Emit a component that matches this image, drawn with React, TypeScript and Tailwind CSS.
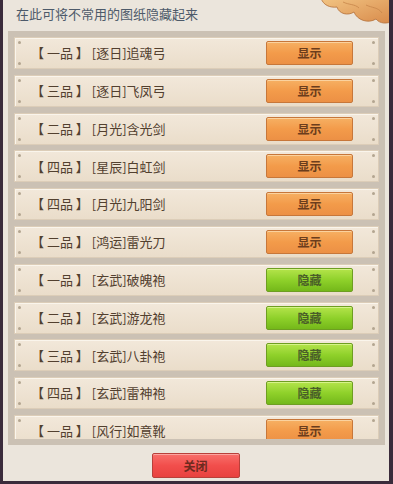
import React from "react";

type Item = { grade: string; tag: string; name: string; hidden: boolean };

const items: Item[] = [
  { grade: "一品", tag: "逐日", name: "追魂弓", hidden: false },
  { grade: "三品", tag: "逐日", name: "飞凤弓", hidden: false },
  { grade: "二品", tag: "月光", name: "含光剑", hidden: false },
  { grade: "四品", tag: "星辰", name: "白虹剑", hidden: false },
  { grade: "四品", tag: "月光", name: "九阳剑", hidden: false },
  { grade: "二品", tag: "鸿运", name: "雷光刀", hidden: false },
  { grade: "一品", tag: "玄武", name: "破魄袍", hidden: true },
  { grade: "二品", tag: "玄武", name: "游龙袍", hidden: true },
  { grade: "三品", tag: "玄武", name: "八卦袍", hidden: true },
  { grade: "四品", tag: "玄武", name: "雷神袍", hidden: true },
  { grade: "一品", tag: "风行", name: "如意靴", hidden: false },
];

function Rivet() {
  return <span className="block w-[3px] h-[3px] rounded-full bg-[#b3a590]" />;
}

function Row({ item }: { item: Item }) {
  return (
    <div className="relative shrink-0 h-[32px] flex items-center bg-gradient-to-b from-[#f2e8da] to-[#eaddca] border border-[#dccdb8] shadow-[inset_1px_1px_0_#faf5ec]">
      <div className="absolute left-[3px] top-[3px]"><Rivet /></div>
      <div className="absolute left-[3px] bottom-[3px]"><Rivet /></div>
      <div className="absolute right-[3px] top-[3px]"><Rivet /></div>
      <div className="absolute right-[3px] bottom-[3px]"><Rivet /></div>
      <span className="ml-[16px] text-[13px] text-[#52402f] whitespace-pre">
        {`【 ${item.grade} 】 [${item.tag}]${item.name}`}
      </span>
      {item.hidden ? (
        <button className="ml-auto mr-[25px] w-[87px] h-[24px] rounded-[2px] border border-[#6e9e22] bg-gradient-to-b from-[#b4e44a] via-[#8fd12a] to-[#74b81a] text-[12px] font-semibold text-[#4a5e28] shadow-[inset_0_1px_0_#d6f48a]">
          隐藏
        </button>
      ) : (
        <button className="ml-auto mr-[25px] w-[87px] h-[24px] rounded-[2px] border border-[#c7773a] bg-gradient-to-b from-[#f6b063] via-[#f39b4a] to-[#ec9045] text-[12px] font-semibold text-[#6b3d1c] shadow-[inset_0_1px_0_#fbd29e]">
          显示
        </button>
      )}
    </div>
  );
}

export default function App() {
  return (
    <div
      className="relative w-[393px] h-[484px] overflow-hidden bg-[#ebe5dc] border-l-[3px] border-r-[4px] border-b-[3px] border-[#3a2b3b] flex flex-col"
      style={{ fontFamily: '"Noto Sans CJK SC", "Noto Sans", sans-serif' }}
    >
      {/* cloud ornament */}
      <svg className="absolute right-[-4px] top-[-2px]" width="72" height="28" viewBox="0 0 72 28">
        <defs>
          <linearGradient id="cl" x1="0" y1="0" x2="1" y2="1">
            <stop offset="0" stopColor="#f2c584" />
            <stop offset="1" stopColor="#d88a4a" />
          </linearGradient>
        </defs>
        <path
          d="M0 0 C2 7 9 10 16 9 C18 16 27 18 33 14 C36 22 47 26 55 21 C59 26 66 26 72 23 L72 0 Z"
          fill="url(#cl)"
          stroke="#b4703a"
          strokeWidth="0.8"
        />
        <path d="M22 4 C28 7 34 6 38 10 M45 7 C51 10 57 9 61 15" fill="none" stroke="#c7854a" strokeWidth="0.8" />
      </svg>

      <div className="h-[31px] pl-[13px] pt-[4px] text-[13px] text-[#4d5a6a]">在此可将不常用的图纸隐藏起来</div>

      <div className="ml-[5px] mr-[4px] h-[414px] bg-[#cbc1b4] p-[6px]">
        <div className="h-full overflow-hidden flex flex-col gap-[5.8px]">
          {items.map((it, i) => (
            <Row key={i} item={it} />
          ))}
        </div>
      </div>

      <div className="flex justify-center pt-[8px] pr-[1px]">
        <button className="w-[88px] h-[25px] rounded-[2px] border border-[#b8403a] bg-gradient-to-b from-[#f86e6a] via-[#f24e4c] to-[#e8423f] text-[12px] font-semibold text-[#6e2a1e] shadow-[inset_0_1px_0_#fca4a0]">
          关闭
        </button>
      </div>
    </div>
  );
}
